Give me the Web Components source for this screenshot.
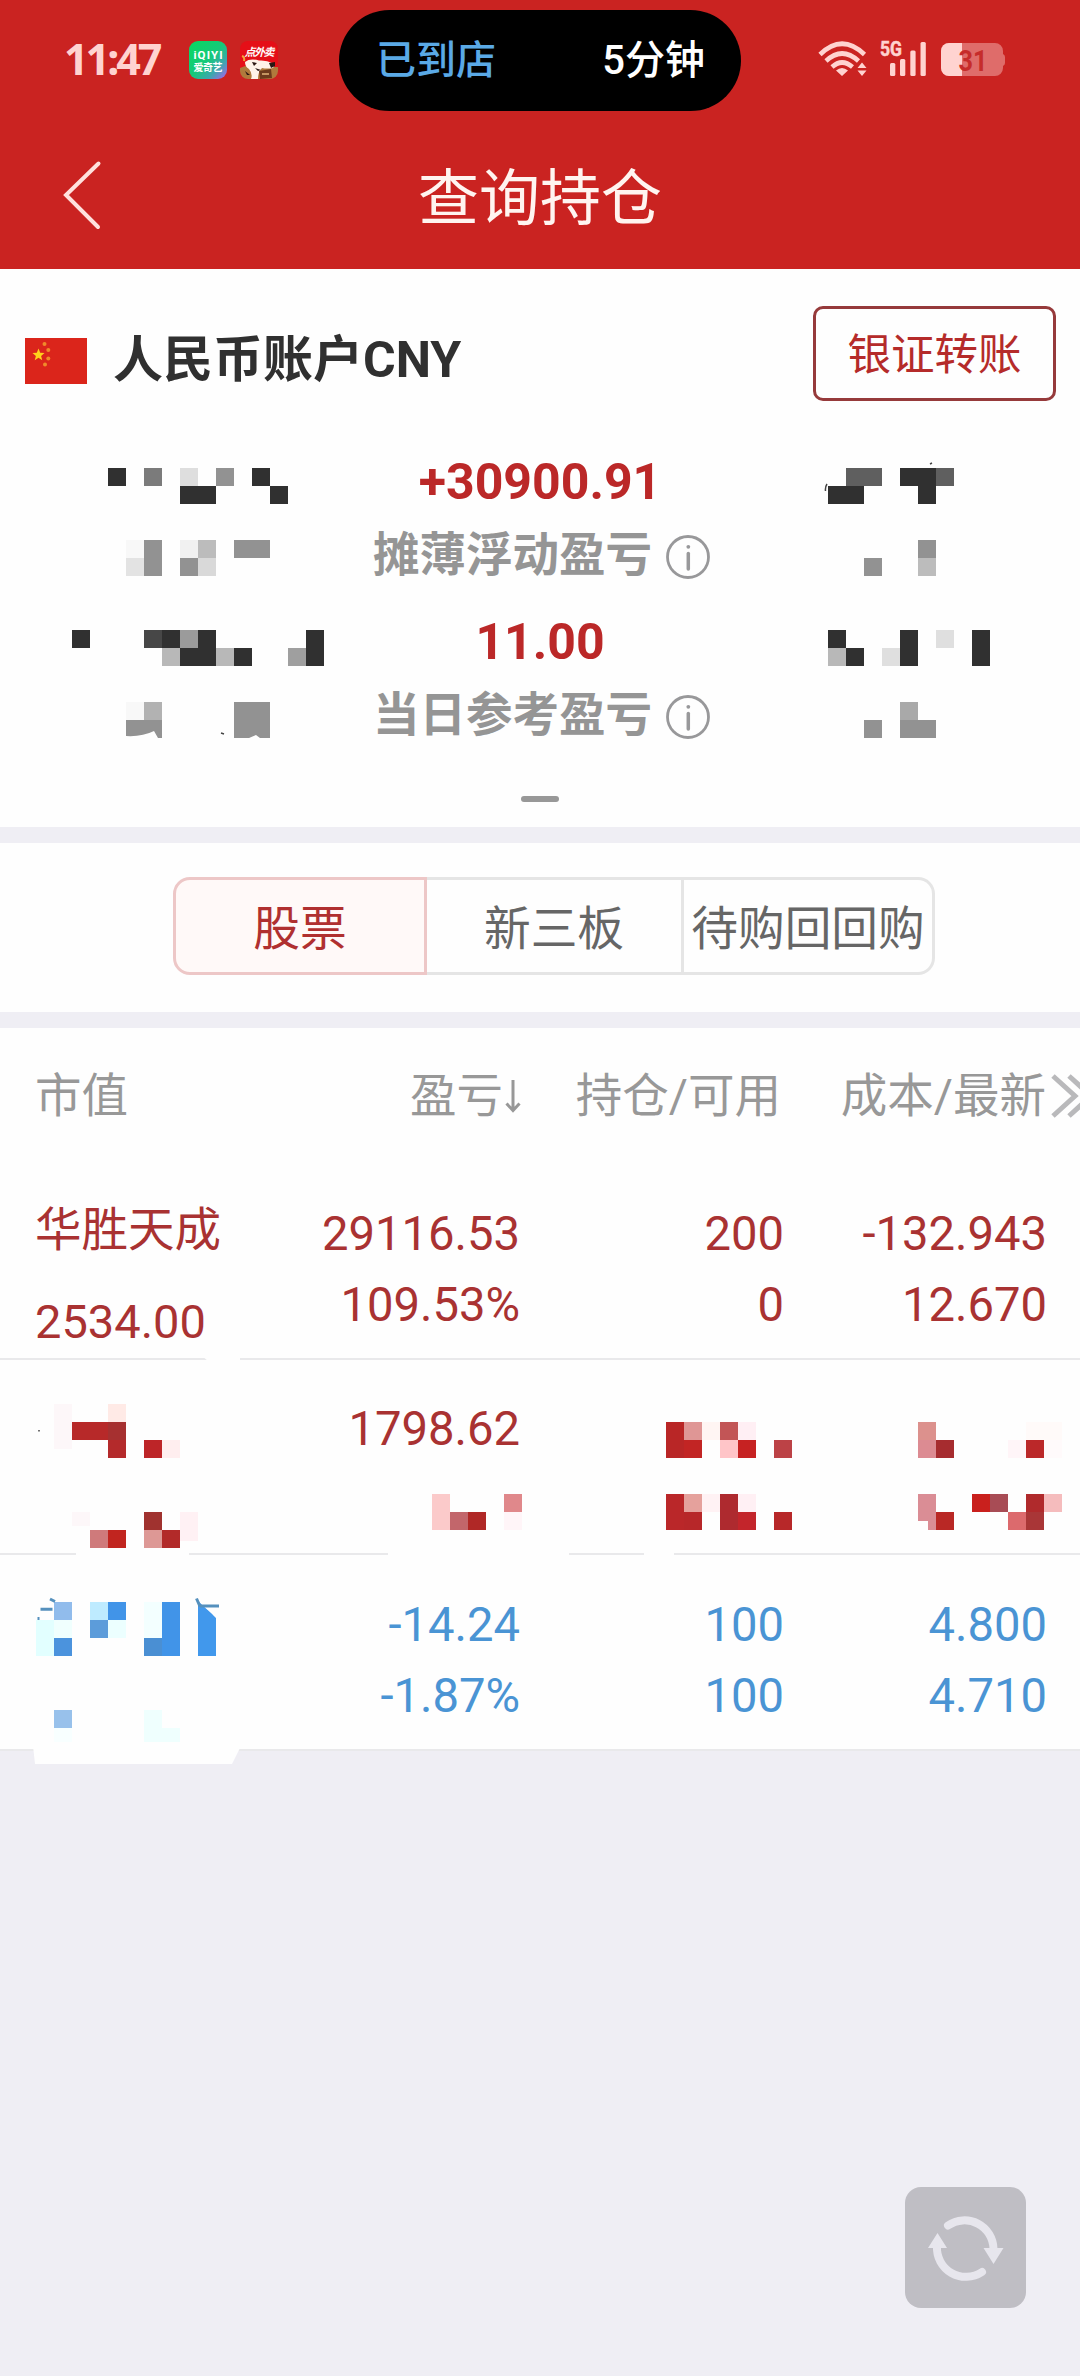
<!DOCTYPE html>
<html lang="zh-CN">
<head>
<meta charset="utf-8">
<title>查询持仓</title>
<style>
  body {
    margin: 0;
    background: #efeef4;
    font-family: Roboto, "Noto Sans CJK SC", sans-serif;
  }
</style>
</head>
<body>
<holdings-page></holdings-page>

<script>
class StatusBar extends HTMLElement {
  constructor() {
    super();
    this.attachShadow({ mode: "open" });
  }

  connectedCallback() {
    this.shadowRoot.innerHTML = `
      <style>
        :host {
          display: grid;
          grid-template-columns: 339px 402px 339px;
          height: 120px;
          color: #ffd3d0;
        }
        .left {
          display: flex;
          align-items: center;
          height: 120px;
          padding-left: 64px;
        }
        .time {
          width: 125px;
          font: 700 43px/60px "Noto Sans", sans-serif;
          letter-spacing: -3px;
          margin-top: -3px;
        }
        .app { display: block; margin-right: 13px; }
        .island {
          display: flex;
          justify-content: space-between;
          align-items: center;
          height: 101px;
          margin-top: 10px;
          padding: 0 36px 0 37px;
          border-radius: 51px;
          background: #000;
          box-sizing: border-box;
          font-size: 40px;
          font-weight: 500;
          line-height: 60px;
        }
        .place { color: #5aa9e6; }
        .eta { color: #fff; }
        .right { padding: 38px 0 0 76px; }
        svg { display: block; }
      </style>
      <div class="left">
        <span class="time">11:47</span>
        <svg class="app" width="38" height="38" viewBox="0 0 38 38">
          <defs>
            <linearGradient id="q" x1="0" y1="0" x2="1" y2="1">
              <stop offset="0" stop-color="#08d860"/>
              <stop offset=".5" stop-color="#16c97a"/>
              <stop offset=".75" stop-color="#3fa5b0"/>
              <stop offset="1" stop-color="#b45cf0"/>
            </linearGradient>
          </defs>
          <rect width="38" height="38" rx="9" fill="url(#q)"/>
          <text x="19" y="18" font-size="11.5" font-weight="700" fill="#fff" text-anchor="middle" textLength="29">iQIYI</text>
          <text x="19" y="29.5" font-size="10" font-weight="700" fill="#fff" text-anchor="middle" textLength="29">爱奇艺</text>
        </svg>
        <svg class="app" width="38" height="38" viewBox="0 0 38 38">
          <defs><clipPath id="r"><rect width="38" height="38" rx="8"/></clipPath></defs>
          <g clip-path="url(#r)">
            <rect width="38" height="38" fill="#e50f17"/>
            <path d="M0 27 Q8 23 16 26 L38 26 V38 H0Z" fill="#b07a3c"/>
            <path d="M5 21 Q10 17 19 19.500 Q27 19 32 22 Q36 23 33 27 Q27 28 22 27 Q18 31 18 38 H11 Q13 33 9 28 Q5 26 5 21Z" fill="#fff3e8"/>
            <path d="M12 21 l5 1 -3 3z M29 22 l6 -1 0 4 -4 2z M15 27 l6 2 -3 1z M5 30l5 4-3 0z" fill="#2a1712"/>
            <path d="M19 30 L31 28 L32 37 L20 38Z" fill="#6d3a1d"/>
            <path d="M2 15 Q5 16 4 20" stroke="#f2a63a" stroke-width="2" fill="none"/>
            <path d="M22 33h7" stroke="#e2b57a" stroke-width="1.500"/>
          </g>
          <text x="19.500" y="14.500" font-size="11" font-weight="700" font-style="italic" fill="#fff" text-anchor="middle" textLength="30">点外卖</text>
        </svg>
      </div>
      <div class="island"><span class="place">已到店</span><span class="eta">5分钟</span></div>
      <div class="right">
        <svg width="192" height="42" viewBox="815 38 192 42">
          <!-- wifi -->
          <g fill="none" stroke="#ffd3d0" stroke-width="4.600">
            <path d="M818 54.500 Q840 33 862.500 54.500"/>
            <path d="M824 61 Q840 46 856.500 61"/>
            <path d="M830 67 Q840 58 850.500 67"/>
          </g>
          <path d="M834 70.500 Q840 65.500 846 70.500 L840 76Z M860 62.500l4.500 5.500h-9z M855.500 70.500h9l-4.500 5.500z" fill="#ffd3d0"/>
          <!-- signal -->
          <text x="878" y="56" font-size="20" font-weight="700" fill="#ffd3d0" stroke="#ffd3d0" stroke-width=".5" textLength="22" lengthAdjust="spacingAndGlyphs">5G</text>
          <g fill="#ffd3d0">
            <rect x="888" y="63" width="5.300" height="13" rx="1.500"/>
            <rect x="898" y="59" width="5.300" height="17" rx="1.500"/>
            <rect x="908.300" y="50.500" width="5.300" height="25.500" rx="1.500"/>
            <rect x="918.500" y="42" width="5.300" height="34" rx="1.500"/>
          </g>
          <!-- battery -->
          <path d="M947 43H993a8 8 0 0 1 8 8V54q2 1 2 3v6q0 2-2 3v2a8 8 0 0 1-8 8H947a8 8 0 0 1-8-8V51a8 8 0 0 1 8-8z" fill="#df6c6a"/>
          <path d="M947 43H960V76H947a8 8 0 0 1-8-8V51a8 8 0 0 1 8-8z" fill="#ffd3d0"/>
          <text x="956.500" y="71" font-size="30" font-weight="700" fill="#c62c2b" textLength="29" lengthAdjust="spacingAndGlyphs">31</text>
        </svg>
      </div>
    `;
  }
}

class NavBar extends HTMLElement {
  constructor() {
    super();
    this.attachShadow({ mode: "open" });
  }

  connectedCallback() {
    this.shadowRoot.innerHTML = `
      <style>
        :host {
          display: grid;
          grid-template-columns: 160px 1fr 160px;
          align-items: center;
          height: 149px;
          color: #fff4f0;
        }
        svg { display: block; margin-left: 62px; }
        h1 {
          margin: 0;
          padding-top: 8px;
          font-size: 61px;
          font-weight: 400;
          line-height: 80px;
          text-align: center;
        }
      </style>
      <svg width="42" height="70" viewBox="0 0 42 70" fill="none" stroke="#ffe1dd" stroke-width="4" stroke-linecap="round">
        <path d="M36.500 3.500 L4 35 L36 67"/>
      </svg>
      <h1><slot></slot></h1>
    `;
  }
}

class ChinaFlag extends HTMLElement {
  constructor() {
    super();
    this.attachShadow({ mode: "open" });
  }

  connectedCallback() {
    this.shadowRoot.innerHTML = `
      <style>
        :host { display: block; width: 62px; height: 46px; }
        svg { display: block; }
      </style>
      <svg width="62" height="46" viewBox="0 0 62 46">
        <rect width="62" height="46" fill="#db251b"/>
        <path d="M13.500 10.500l1.700 4.300 4.300.2-3.400 2.900 1.200 4.400-3.800-2.500-3.800 2.500 1.200-4.400-3.400-2.900 4.300-.2z" fill="#ffd21c"/>
        <g fill="#f08a2a">
          <circle cx="19.500" cy="6" r="2"/>
          <circle cx="23.300" cy="12" r="2"/>
          <circle cx="23.300" cy="20.500" r="2"/>
          <circle cx="20" cy="26.500" r="2"/>
        </g>
      </svg>
    `;
  }
}

class MetricItem extends HTMLElement {
  constructor() {
    super();
    this.attachShadow({ mode: "open" });
  }

  connectedCallback() {
    this.shadowRoot.innerHTML = `
      <style>
        :host {
          display: flex;
          flex-direction: column;
          align-items: center;
          gap: 14px;
        }
        .value {
          color: #bb2828;
          font-size: 50px;
          font-weight: 700;
          line-height: 60px;
        }
        .label {
          display: flex;
          align-items: center;
          gap: 14px;
          height: 60px;
          padding-left: 3px;
          color: #959595;
          font-size: 46.500px;
          font-weight: 700;
          line-height: 58px;
        }
        span { margin-top: -2px; }
        svg { display: block; margin-top: 2px; }
      </style>
      <div class="value">${this.getAttribute("value")}</div>
      <div class="label">
        <span><slot></slot></span>
        <svg width="44" height="44" viewBox="0 0 44 44">
          <circle cx="22" cy="22" r="20.500" fill="none" stroke="#98989a" stroke-width="2.800"/>
          <circle cx="22.300" cy="11.800" r="1.900" fill="#98989a"/>
          <path d="M22.300 18.500V34" stroke="#98989a" stroke-width="3.500" stroke-linecap="round"/>
        </svg>
      </div>
    `;
  }
}

class AccountCard extends HTMLElement {
  constructor() {
    super();
    this.attachShadow({ mode: "open" });
  }

  connectedCallback() {
    this.shadowRoot.innerHTML = `
      <style>
        :host {
          display: flex;
          flex-direction: column;
          height: 558px;
          padding-top: 37px;
          box-sizing: border-box;
          background: #fefefe;
        }
        .top {
          display: flex;
          justify-content: space-between;
          padding: 0 24px 0 25px;
        }
        .name {
          display: flex;
          align-items: center;
          gap: 26px;
          height: 109px;
          color: #303030;
          font-size: 50px;
          font-weight: 700;
          line-height: 60px;
        }
        .name span { margin-top: -2px; }
        button {
          width: 243px;
          height: 95px;
          padding: 4px 0 0;
          border: 3px solid #963a3b;
          border-radius: 10px;
          background: none;
          color: #b52b2a;
          font: 400 43.500px/85px Roboto, "Noto Sans CJK SC", sans-serif;
        }
        .metrics {
          display: flex;
          flex-direction: column;
          gap: 26px;
          margin-top: 37px;
        }
        .handle {
          width: 38px;
          height: 6px;
          margin: 50px auto 0;
          border-radius: 3px;
          background: #989898;
        }
      </style>
      <div class="top">
        <div class="name"><china-flag></china-flag><span>人民币账户CNY</span></div>
        <button>银证转账</button>
      </div>
      <div class="metrics">
        <metric-item value="+30900.91">摊薄浮动盈亏</metric-item>
        <metric-item value="11.00">当日参考盈亏</metric-item>
      </div>
      <div class="handle"></div>
    `;
  }
}

class SegmentTabs extends HTMLElement {
  constructor() {
    super();
    this.attachShadow({ mode: "open" });
  }

  connectedCallback() {
    const tabs = this.getAttribute("tabs").split(",");
    this.shadowRoot.innerHTML = `
      <style>
        :host {
          display: block;
          margin: 16px 0;
          padding: 34px 145px 37px 173px;
          background: #fefefe;
        }
        .tabs {
          display: grid;
          grid-template-columns: 254px 257px 251px;
          height: 98px;
        }
        .tab {
          box-sizing: border-box;
          height: 98px;
          border: 3px solid #e5e5e5;
          border-left: 0;
          padding-top: 6px;
          color: #666;
          font-size: 46.700px;
          line-height: 86px;
          text-align: center;
          white-space: nowrap;
        }
        .tab:first-child {
          border: 3px solid #edc7c7;
          border-radius: 17px 0 0 17px;
          background: #fff9f8;
          color: #b03030;
        }
        .tab:last-child { border-radius: 0 17px 17px 0; }
      </style>
      <div class="tabs">${tabs.map((t) => `<div class="tab">${t}</div>`).join("")}</div>
    `;
  }
}

class HoldingRow extends HTMLElement {
  constructor() {
    super();
    this.attachShadow({ mode: "open" });
  }

  connectedCallback() {
    // each column is "first|second"
    const cols = this.getAttribute("cols").split(",").map((c) => c.split("|"));
    const line = (t) => `<div>${t || "&nbsp;"}</div>`;
    this.shadowRoot.innerHTML = `
      <style>
        :host {
          display: grid;
          grid-template-columns: 204px 281px 264px 263px;
          height: 195.600px;
          padding: 34.500px 0 0 35px;
          box-sizing: border-box;
          border-bottom: 2px solid #e9e9eb;
          color: #a93232;
          font-size: 47.200px;
          line-height: 71px;
        }
        :host([trend="down"]) { color: #4a94d4; }
        .num { text-align: right; }
        .name {
          margin-top: -4px;
          font-size: 46.500px;
          line-height: 71px;
          white-space: nowrap;
        }
        .name div + div { font-size: 47px; margin-top: 20px; }
      </style>
      ${cols.map((c, i) => `<div class="${i ? "num" : "name"}">${line(c[0])}${line(c[1])}</div>`).join("")}
    `;
  }
}

class HoldingsTable extends HTMLElement {
  constructor() {
    super();
    this.attachShadow({ mode: "open" });
  }

  connectedCallback() {
    this.shadowRoot.innerHTML = `
      <style>
        :host { display: block; background: #fefefe; }
        .head {
          display: grid;
          grid-template-columns: 204px 282px 260px 265px 34px;
          align-items: center;
          height: 136px;
          padding-left: 35px;
          color: #989898;
          font-size: 46.500px;
          line-height: 60px;
          white-space: nowrap;
        }
        .head div { text-align: right; }
        .head div:first-child { text-align: left; }
        .head .sort {
          display: flex;
          justify-content: flex-end;
          align-items: center;
          gap: 2px;
        }
        svg { display: block; }
        .more { margin-left: 5px; }
      </style>
      <div class="head">
        <div>市值</div>
        <div class="sort">盈亏<svg width="16" height="34" viewBox="0 0 16 34" fill="none" stroke="#989898" stroke-width="3">
          <path d="M8 1V31M1.500 24.500L8 31.500L14.500 24.500"/></svg></div>
        <div>持仓/可用</div>
        <div>成本/最新</div>
        <svg class="more" width="29" height="44" viewBox="0 0 29 44" fill="none" stroke="#b9b9bb" stroke-width="5">
          <path d="M2 2L24 22L2 42M18 2L40 22L18 42"/></svg>
      </div>
      <holding-row cols="华胜天成|2534.00,29116.53|109.53%,200|0,-132.943|12.670"></holding-row>
      <holding-row cols="|,1798.62|,|,|"></holding-row>
      <holding-row trend="down" cols="|,-14.24|-1.87%,100|100,4.800|4.710"></holding-row>
    `;
  }
}

// Mosaic that covers private figures. Cells are [col, row, width, height, color] on an 18px grid.
const CELL = 18;
const MOSAIC = [
  [6,26,1,1,"#303030"],[8,26,1,1,"#7b7b7b"],[10,26,1,1,"#dedede"],[12,26,1,1,"#929292"],[14,26,1,1,"#303030"],
  [10,27,2,1,"#303030"],[15,27,1,1,"#303030"],
  [7,30,1,1,"#f8f8f8"],[8,30,1,2,"#929292"],[10,30,1,1,"#f1f1f1"],[11,30,1,1,"#bcbcbc"],[13,30,2,1,"#929292"],
  [7,31,1,1,"#e3e3e3"],[10,31,1,1,"#929292"],[11,31,1,1,"#d9d9d9"],
  [47,26,2,1,"#5f5f5f"],[50,26,2,1,"#303030"],[52,26,1,1,"#5f5f5f"],[46,27,2,1,"#303030"],[51,27,1,1,"#303030"],
  [51,30,1,1,"#929292"],[48,31,1,1,"#929292"],[51,31,1,1,"#bcbcbc"],

  [4,35,1,1,"#303030"],[8,35,1,1,"#474747"],[9,35,1,1,"#303030"],[10,35,1,1,"#9b9b9b"],[11,35,1,2,"#303030"],[17,35,1,2,"#303030"],
  [9,36,1,1,"#b8b8b8"],[10,36,1,1,"#303030"],[12,36,1,1,"#b8b8b8"],[13,36,1,1,"#303030"],[16,36,1,1,"#9f9f9f"],
  [7,39,1,1,"#f8f8f8"],[8,39,1,1,"#b2b2b2"],[7,40,2,1,"#929292"],[13,39,2,2,"#929292"],
  [46,35,1,1,"#303030"],[50,35,1,2,"#303030"],[52,35,1,1,"#dfdfdf"],[54,35,1,2,"#303030"],
  [46,36,1,1,"#b8b8b8"],[47,36,1,1,"#303030"],[49,36,1,1,"#dfdfdf"],
  [50,39,1,1,"#a9a9a9"],[48,40,1,1,"#929292"],[50,40,2,1,"#929292"],

  [3,78,1,2.5,"#fdf7f9"],[6,78,1,1,"#ffeae6"],[4,79,2,1,"#b72929"],[6,79,1,1,"#a63030"],[6,80,1,1,"#b42a2b"],[8,80,1,1,"#bd2528"],[9,80,1,1,"#ffeeef"],
  [4,84,1,.8,"#fdf7f9"],[8,84,1,1,"#a0322f"],[10,84,1,1.6,"#fff1f4"],
  [5,85,1,1,"#cf7a7b"],[6,85,1,1,"#c1251f"],[8,85,1,1,"#dd9895"],[9,85,1,1,"#b22a29"],
  [24,83,1,2,"#fbcaca"],[25,84,1,1,"#c2666b"],[26,84,1,1,"#b02826"],[28,83,1,1,"#e0888b"],[28,84,1,1,"#fff5f8"],
  [37,79,1,2,"#b92626"],[38,79,1,1,"#df9695"],[39,79,1,1,"#fff5f3"],[40,79,1,1,"#c25556"],[41,79,1,1,"#ffeff4"],
  [38,80,1,1,"#c22524"],[40,80,1,1,"#ffc5c8"],[41,80,1,1,"#c62222"],[43,80,1,1,"#bc4246"],
  [51,79,1,1,"#dc918d"],[51,80,1,1,"#dc8b92"],[52,80,1,1,"#a62c2f"],[56,80,1,1,"#fff5f8"],[57,79,2,1,"#fffaf9"],[57,80,1,1,"#bb2829"],[58,80,1,1,"#fffafb"],
  [37,83,1,2,"#ba2729"],[38,83,1,1,"#e5a19c"],[39,83,1,1,"#fff2f4"],[40,83,1,2,"#ae2a2f"],[41,83,1,1,"#fff0f4"],
  [38,84,1,1,"#b72729"],[41,84,1,1,"#c3252b"],[43,84,1,1,"#b72829"],
  [51,83,1,1.5,"#da8d95"],[51.55,84,.45,1,"#da8d95"],[52,84,1,1,"#b92825"],[54,83,1,1,"#c9201d"],[55,83,1,1,"#a84c55"],
  [56,84,1,1,"#dc6a6d"],[57,83,1,1,"#b02a2c"],[57,84,1,1,"#a93637"],[58,83,1,1,"#f5bcbd"],

  [3,89,1,1,"#91bcec"],[5,89,1,1,"#beebff"],[6,89,1,1,"#4194e8"],[8,89,1,2,"#f3ffff"],[9,89,1,3,"#4194e8"],[11,89,1,3,"#4198ec"],
  [2,90,1,2,"#e2ffff"],[3,90,1,1,"#f0fffe"],[5,90,1,1,"#5c9cda"],[6,90,1,1,"#ecffff"],[3,91,1,1,"#4b93dd"],[8,91,1,1,"#4a8fd3"],
  [3,95,1,1,"#98c1eb"],[3,96,1,.8,"#f8ffff"],[8,95,1,1.8,"#effffe"],[9,96,1,.8,"#effffe"],
];

class MosaicMask extends HTMLElement {
  constructor() {
    super();
    this.attachShadow({ mode: "open" });
  }

  connectedCallback() {
    const rects = MOSAIC.map(([x, y, w, h, c]) =>
      `<rect x="${x * CELL}" y="${y * CELL}" width="${w * CELL}" height="${h * CELL}" fill="${c}"/>`
    ).join("");
    this.shadowRoot.innerHTML = `
      <style>
        :host { display: block; position: absolute; top: 0; left: 0; pointer-events: none; }
        svg { display: block; }
      </style>
      <svg width="1080" height="1780" viewBox="0 0 1080 1780">
        <!-- wiped parts of the row lines and the card edge -->
        <path fill="#fefefe" d="M202 1356H240V1361H208Z M76 1552H189V1557H76Z M388 1552H569V1557H388Z M644 1552H674V1557H644Z M33 1746H241L232 1764H35Z"/>
        <g shape-rendering="crispEdges">${rects}</g>
        <path fill="#fefefe" d="M126 736q16 1 28-5l4 7H126z M154 731l4 7h-6z M249 738l7-3 4 3z M198 1601l18 17v-17z"/>
        <path fill="#4198ec" d="M198 1605q11 4 17 13H198z"/>
        <g fill="none" stroke="#5590bd" stroke-width="3">
          <path d="M40.500 1609.300H52.500M50 1599l5 2.500M196.500 1598.500l3.500 8M200 1606H219M37.500 1618.500h2"/>
        </g>
        <path d="M827 484q-2 3-1.500 7M930 464l2-1M221 733l3 1M39 1430v1.500" stroke="#444" stroke-width="1.500" fill="none"/>
      </svg>
    `;
  }
}

class RefreshButton extends HTMLElement {
  constructor() {
    super();
    this.attachShadow({ mode: "open" });
  }

  connectedCallback() {
    this.shadowRoot.innerHTML = `
      <style>
        :host {
          display: block;
          position: absolute;
          right: 54px;
          bottom: 68px;
          width: 121px;
          height: 121px;
          border-radius: 16px;
          background: #bfbec4;
        }
        svg { display: block; }
      </style>
      <svg width="121" height="121" viewBox="0 0 121 121">
        <g fill="none" stroke="#e7e6ed" stroke-width="8">
          <path d="M43 38.500A29 29 0 0 1 88.500 62" stroke-linecap="round"/>
          <path d="M77 85A29 29 0 0 1 32 59" stroke-linecap="round"/>
        </g>
        <path d="M78.500 61H98.500L88.500 77Z M23 61L32.500 46L42 61Z" fill="#e7e6ed"/>
      </svg>
    `;
  }
}

class HoldingsPage extends HTMLElement {
  constructor() {
    super();
    this.attachShadow({ mode: "open" });
  }

  connectedCallback() {
    this.shadowRoot.innerHTML = `
      <style>
        :host {
          display: block;
          position: relative;
          width: 1080px;
          height: 2376px;
          overflow: hidden;
          background: #efeef4;
        }
        header { background: #ca2321; }
      </style>
      <header>
        <status-bar></status-bar>
        <nav-bar>查询持仓</nav-bar>
      </header>
      <account-card></account-card>
      <segment-tabs tabs="股票,新三板,待购回回购"></segment-tabs>
      <holdings-table></holdings-table>
      <mosaic-mask></mosaic-mask>
      <refresh-button></refresh-button>
    `;
  }
}

customElements.define("status-bar", StatusBar);
customElements.define("nav-bar", NavBar);
customElements.define("china-flag", ChinaFlag);
customElements.define("metric-item", MetricItem);
customElements.define("account-card", AccountCard);
customElements.define("segment-tabs", SegmentTabs);
customElements.define("holding-row", HoldingRow);
customElements.define("holdings-table", HoldingsTable);
customElements.define("mosaic-mask", MosaicMask);
customElements.define("refresh-button", RefreshButton);
customElements.define("holdings-page", HoldingsPage);
</script>
</body>
</html>
